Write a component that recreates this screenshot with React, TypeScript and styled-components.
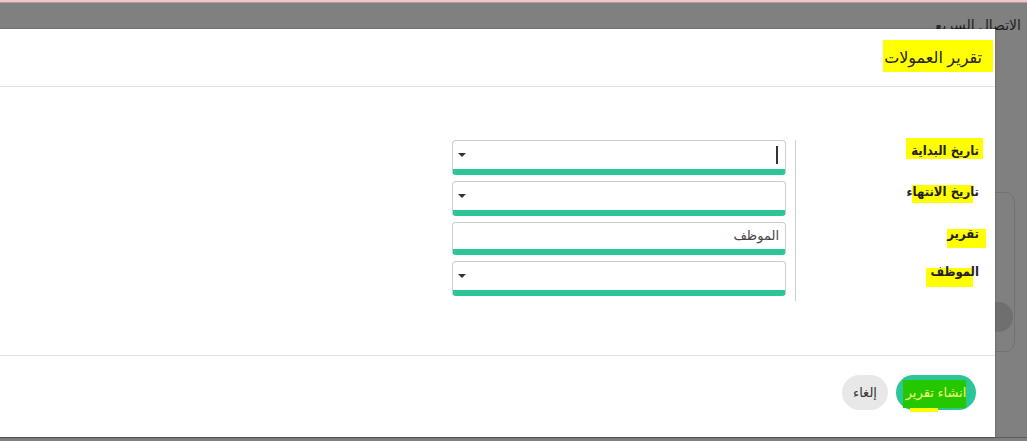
import React from "react";
import styled, { createGlobalStyle } from "styled-components";

const GlobalStyle = createGlobalStyle`
  html, body { margin: 0; padding: 0; background: #808080; }
  body { font-family: "Liberation Sans", "DejaVu Sans", Arial, sans-serif; }
  * { box-sizing: border-box; }
`;

const Page = styled.div`
  position: relative;
  width: 1027px;
  height: 441px;
  overflow: hidden;
  background: #808080;
`;

const TopStripe = styled.div`
  height: 3px;
  background: #f2c6ca;
  border-bottom: 1px solid #b59b9d;
`;

const BackTitle = styled.div`
  position: absolute;
  top: 17px;
  right: 6px;
  direction: rtl;
  font-size: 14px;
  color: #1e1e1e;
`;

const BackCard = styled.div`
  position: absolute;
  top: 192px;
  left: 960px;
  width: 55px;
  height: 160px;
  border: 1px solid #727272;
  border-radius: 10px;
`;

const BackCircle = styled.div`
  position: absolute;
  top: 302px;
  left: 985px;
  width: 28px;
  height: 30px;
  border-radius: 50%;
  background: #6f6f6f;
`;

const BackBottom = styled.div`
  position: absolute;
  left: 0;
  right: 0;
  bottom: 0;
  height: 4px;
  border-top: 1px solid #5c5c5c;
`;

const Modal = styled.div`
  position: absolute;
  top: 29px;
  right: 32px;
  width: 1080px;
  height: 408px;
  background: #fff;
  direction: rtl;
  display: flex;
  flex-direction: column;
  box-shadow: 0 0 2px rgba(0, 0, 0, 0.35);
`;

const ModalHeader = styled.div`
  height: 58px;
  border-bottom: 1px solid #dee2e6;
  display: flex;
  align-items: center;
  padding-right: 13px;
`;

const Title = styled.h5`
  margin: 0;
  font-size: 16px;
  font-weight: normal;
  color: #222;
  line-height: 22px;
`;

const Mark = styled.span<{ $inset: string; $color?: string; $inset2?: string; $color2?: string }>`
  position: relative;
  z-index: 0;
  &::before {
    content: "";
    position: absolute;
    inset: ${(p) => p.$inset};
    background: ${(p) => p.$color || "#ffff00"};
    z-index: -1;
  }
  ${(p) =>
    p.$inset2
      ? `&::after {
    content: "";
    position: absolute;
    inset: ${p.$inset2};
    background: ${p.$color2 || "#ffff00"};
    z-index: -2;
  }`
      : ""}
`;

const ModalBody = styled.div`
  height: 268px;
  padding: 53px 16px 0 0;
`;

const FormRow = styled.div`
  display: flex;
  align-items: flex-start;
`;

const LabelCol = styled.div`
  width: 184px;
  height: 161px;
  border-left: 1px solid #cfcfcf;
  display: flex;
  flex-direction: column;
  align-items: flex-start;
`;

const Label = styled.label<{ $mt: number }>`
  margin-top: ${(p) => p.$mt}px;
  font-family: "DejaVu Sans Condensed", "DejaVu Sans", sans-serif;
  font-size: 13px;
  line-height: 22px;
  color: #222;
  font-weight: bold;
`;

const InputCol = styled.div`
  width: 334px;
  margin-right: 9px;
  display: flex;
  flex-direction: column;
  gap: 6px;
`;

const Field = styled.div<{ $h: number }>`
  height: ${(p) => p.$h}px;
  border: 1px solid #cccccc;
  border-bottom: 6px solid #2bc597;
  border-radius: 4px;
  display: flex;
  align-items: center;
  justify-content: space-between;
  padding: 0 6px 0 5px;
`;

const Cursor = styled.span`
  width: 2px;
  height: 18px;
  background: #333;
  margin-right: 1px;
`;

const Placeholder = styled.span`
  font-size: 13px;
  color: #444;
  margin-top: -2px;
`;

const Caret = styled.span`
  width: 0;
  height: 0;
  border-left: 4px solid transparent;
  border-right: 4px solid transparent;
  border-top: 4px solid #333;
  margin-right: auto;
`;

const ModalFooter = styled.div`
  flex: 1;
  border-top: 1px solid #dee2e6;
  display: flex;
  gap: 8px;
  padding: 19px 19px 0 0;
  align-items: flex-start;
`;

const PillButton = styled.button<{ $variant: "primary" | "secondary" }>`
  height: 35px;
  border: none;
  border-radius: 18px;
  font-family: inherit;
  font-size: 13px;
  padding: 0;
  width: ${(p) => (p.$variant === "primary" ? 80 : 46)}px;
  background: ${(p) => (p.$variant === "primary" ? "#2bc597" : "#e8e8e8")};
  color: ${(p) => (p.$variant === "primary" ? "#f6f67a" : "#333")};
  display: flex;
  align-items: center;
  justify-content: center;
  direction: rtl;
`;

const Dropdown = () => <Caret />;

export default function App() {
  return (
    <Page>
      <GlobalStyle />
      <TopStripe />
      <BackTitle>الاتصال السريع</BackTitle>
      <BackCard />
      <BackCircle />
      <BackBottom />
      <Modal>
        <ModalHeader>
          <Title>
            <Mark $inset="-9px -11px -6px -1px">تقرير العمولات</Mark>
          </Title>
        </ModalHeader>
        <ModalBody>
          <FormRow>
            <LabelCol>
              <Label $mt={0}>
                <Mark $inset="-5px -4px -1px -5px">تاريخ البداية</Mark>
              </Label>
              <Label $mt={19}>
                <Mark $inset="1px 6px -4px 5px">تاريخ الانتهاء</Mark>
              </Label>
              <Label $mt={20}>
                <Mark $inset="3px -7px -7px 0px">تقرير</Mark>
              </Label>
              <Label $mt={16}>
                <Mark $inset="4px 6px -8px -4px">الموظف</Mark>
              </Label>
            </LabelCol>
            <InputCol>
              <Field $h={35}>
                <Cursor />
                <Dropdown />
              </Field>
              <Field $h={35}>
                <Dropdown />
              </Field>
              <Field $h={33}>
                <Placeholder>الموظف</Placeholder>
              </Field>
              <Field $h={35}>
                <Dropdown />
              </Field>
            </InputCol>
          </FormRow>
        </ModalBody>
        <ModalFooter>
          <PillButton $variant="primary">
            <Mark
              $inset="-5px 0px -8px -3px"
              $color="#25c800"
              $inset2="-5px 28px -12px 4px"
              $color2="#ffff00"
            >
              انشاء تقرير
            </Mark>
          </PillButton>
          <PillButton $variant="secondary">إلغاء</PillButton>
        </ModalFooter>
      </Modal>
    </Page>
  );
}
